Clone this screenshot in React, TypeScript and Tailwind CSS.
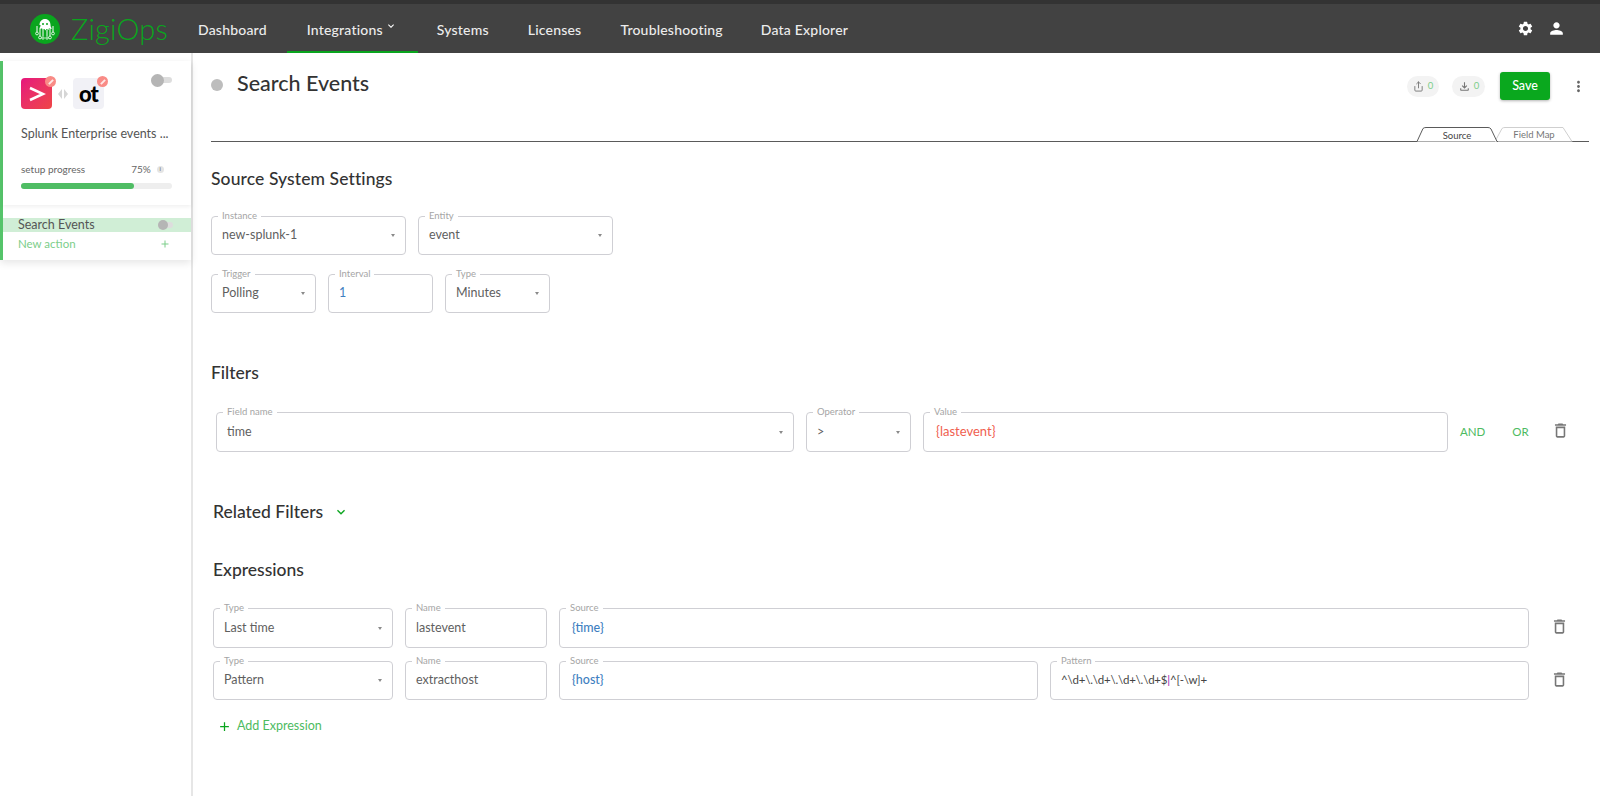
import type { ReactNode } from "react";
import { MdAdd, MdDeleteOutline, MdKeyboardArrowDown, MdMoreVert, MdOutlineFileDownload, MdPerson, MdSettings } from "react-icons/md";
import { Share } from "lucide-react";

const navItems = [
  { label: "Dashboard", cls: "ml-[33px]" },
  { label: "Integrations", cls: "ml-[40px]" },
  { label: "Systems", cls: "ml-[54px]" },
  { label: "Licenses", cls: "ml-[39px]" },
  { label: "Troubleshooting", cls: "ml-[39px]" },
  { label: "Data Explorer", cls: "ml-[38px]" },
];

function Logo() {
  return (
    <svg width="30" height="30" viewBox="0 0 30 30" className="shrink-0">
      <circle cx="15" cy="15" r="15" fill="#0aa51e" />
      <path d="M9.500 11c0-3.500 2.300-6 5.500-6s5.500 2.500 5.500 6c0 1.500 .5 2.500 1.500 3.500l-2 .5-1-1-.5 2-2-1-1 1.500-1-1.500-2 1-.5-2-1 1-2-.5c1-1 1.500-2 1.500-3.500z" fill="#fff" />
      <path d="M7 12v6M10 15v7M13 16v6M17 16v6M20 15v7M23 12v6" stroke="#fff" strokeWidth="1" fill="none" />
      <circle cx="7" cy="19.500" r="1.400" fill="none" stroke="#fff" strokeWidth=".8" />
      <circle cx="10" cy="23.500" r="1.400" fill="none" stroke="#fff" strokeWidth=".8" />
      <circle cx="13" cy="24" r="1.200" fill="none" stroke="#fff" strokeWidth=".8" />
      <circle cx="17" cy="24" r="1.200" fill="none" stroke="#fff" strokeWidth=".8" />
      <circle cx="20" cy="23.500" r="1.400" fill="none" stroke="#fff" strokeWidth=".8" />
      <circle cx="23" cy="19.500" r="1.400" fill="none" stroke="#fff" strokeWidth=".8" />
      <circle cx="13" cy="10" r="1" fill="#0aa51e" />
      <circle cx="17" cy="10" r="1" fill="#0aa51e" />
    </svg>
  );
}

function Header() {
  return (
    <header className="flex h-[53px] shrink-0 items-center border-t-4 border-[#333333] bg-[#424242] pl-[30px] pr-[34px]">
      <Logo />
      <span className="ml-[11px] w-[94px] text-[29px] leading-none font-light tracking-[0.2px] text-[#0aa51e]">ZigiOps</span>
      {navItems.map((item) => (
        <div key={item.label} className={`${item.cls} relative flex h-full items-center pt-[2px] text-[14px] font-medium tracking-[0.2px] text-[#ececec]`}>
          {item.label}
          {item.label === "Integrations" && (
            <>
              <MdKeyboardArrowDown className="absolute -right-[14px] top-[16px] text-[12px] text-white" />
              <span className="absolute -left-[20px] -right-[35px] bottom-0 h-[2px] bg-[#0aa51e]" />
            </>
          )}
        </div>
      ))}
      <div className="ml-auto flex items-center gap-[13px] text-white">
        <MdSettings className="text-[17px]" />
        <MdPerson className="text-[19px]" />
      </div>
    </header>
  );
}

function Toggle({ small }: { small?: boolean }) {
  return (
    <div className={`relative h-[6px] rounded-full bg-[#dddddd] ${small ? "w-[15px]" : "w-[21px]"}`}>
      <span className={`absolute left-0 rounded-full bg-[#b5b5b5] ${small ? "-top-[2px] h-[10px] w-[10px]" : "-top-[3.500px] h-[13px] w-[13px]"}`} />
    </div>
  );
}

function Badge() {
  return (
    <span className="absolute -right-[4px] -top-[2px] flex h-[11px] w-[11px] items-center justify-center rounded-full bg-[#f98b86]">
      <span className="h-[2px] w-[6px] -rotate-45 bg-white/80" />
    </span>
  );
}

function Sidebar() {
  return (
    <aside className="w-[193px] shrink-0 border-r-2 border-[#e6e6e6] pt-[8px]">
      <div className="border-l-[3px] border-[#55c46a] shadow-[0_3px_8px_rgba(0,0,0,0.10)]">
        <div className="h-[144px] px-[18px] pt-[17px] shadow-[0_2px_4px_rgba(0,0,0,0.06)]">
          <div className="flex items-start">
            <div className="relative flex h-[31px] w-[31px] items-center justify-center rounded-[4px] bg-gradient-to-br from-[#e6127c] to-[#ef4444]">
              <svg width="18" height="16" viewBox="0 0 18 16">
                <path d="M2 2l13 6-13 6" fill="none" stroke="#fff" strokeWidth="2.600" />
              </svg>
              <Badge />
            </div>
            <svg width="10" height="10" viewBox="0 0 10 10" className="ml-[6px] mt-[11px]">
              <path d="M4 0v10L0 5zM6 0v10l4-5z" fill="#d6d6d6" />
            </svg>
            <div className="relative ml-[5px] flex h-[31px] w-[31px] items-center justify-center rounded-[4px] bg-[#f1f1f6] text-[22px] font-black tracking-[-1px] text-black">
              ot
              <Badge />
            </div>
            <div className="ml-auto -mt-[1px] mr-[1px]">
              <Toggle />
            </div>
          </div>
          <div className="mt-[16px] whitespace-nowrap text-[12.500px] leading-[18px] text-[#555555]">Splunk Enterprise events ...</div>
          <div className="mt-[19px] flex items-center text-[10px] leading-[14px] text-[#666666]">
            <span>setup progress</span>
            <span className="ml-[46px]">75%</span>
            <span className="ml-[6px] flex h-[7px] w-[7px] items-center justify-center rounded-full bg-[#e4e4e4] text-[6px] leading-none">i</span>
          </div>
          <div className="mt-[7px] h-[6px] w-[151px] rounded-full bg-[#eeeeee]">
            <div className="h-full w-[113px] rounded-full bg-[#4fbd64]" />
          </div>
        </div>
        <div className="pt-[13px] pb-[9px]">
          <div className="flex h-[14px] items-center justify-between bg-[#d0eed6] pl-[15px] pr-[18px] text-[12.500px] text-[#555555]">
            Search Events
            <Toggle small />
          </div>
          <div className="mt-[5px] flex items-center justify-between pl-[15px] pr-[20px] text-[11.500px] leading-[14px] text-[#7cce8a]">
            New action
            <MdAdd className="text-[12px]" />
          </div>
        </div>
      </div>
    </aside>
  );
}

function Field({ label, w, children, caret, h = "h-[39px]" }: { label: string; w: string; children: ReactNode; caret?: boolean; h?: string }) {
  return (
    <div className={`relative flex ${w} ${h} shrink-0 items-center justify-between rounded-[4px] border border-[#cfcfd4] px-[10px] text-[12.500px] text-[#5f5f5f]`}>
      <span className="absolute -top-[7px] left-[6px] bg-white px-[4px] text-[9.500px] leading-[12px] text-[#a5a5a5]">{label}</span>
      <span className="whitespace-nowrap">{children}</span>
      {caret && <span className="h-0 w-0 border-x-[2.500px] border-t-[3px] border-x-transparent border-t-[#8a8a8a]" />}
    </div>
  );
}

function Trash({ cls }: { cls: string }) {
  return <MdDeleteOutline className={`-mt-[3px] text-[19px] text-[#777777] ${cls}`} />;
}

function Toolbar() {
  return (
    <div className="flex h-[73px] items-start pt-[19px]">
      <span className="mt-[7px] h-[12px] w-[12px] rounded-full bg-[#bdbdbd]" />
      <h1 className="-mt-[2px] ml-[14px] text-[21.500px] leading-[26px] font-medium text-[#333333]">Search Events</h1>
      <div className="ml-auto flex items-center pr-[13px]">
        <div className="flex h-[21px] w-[32px] items-center justify-center gap-[4px] rounded-full bg-[#f3f3f3] text-[9.500px] text-[#7cce8a]">
          <Share size={11} className="text-[#777777]" />0
        </div>
        <div className="ml-[13px] flex h-[21px] w-[33px] items-center justify-center gap-[3px] rounded-full bg-[#f3f3f3] text-[9.500px] text-[#7cce8a]">
          <MdOutlineFileDownload className="text-[13px] text-[#777777]" />0
        </div>
        <button className="ml-[15px] h-[28px] w-[50px] rounded-[3px] bg-[#0aa81e] text-[12.500px] font-medium text-white shadow-[0_1px_3px_rgba(0,0,0,0.3)]">Save</button>
        <MdMoreVert className="ml-[20px] text-[17px] text-[#666666]" />
      </div>
    </div>
  );
}

function Tabs() {
  return (
    <div className="relative mr-[11px] h-[16px] border-b border-[#5a5a5a]">
      <div className="absolute bottom-[-1px] right-[16px] h-[15px] w-[78px] text-center text-[9.500px] leading-[15px] text-[#777777]">
        <svg width="78" height="15" viewBox="0 0 78 15" className="absolute left-0 top-0">
          <path d="M0 14.500L7 1.500Q8 .5 10 .5H68L77 14.500" fill="#fff" stroke="#cfcfcf" />
        </svg>
        <span className="relative">Field Map</span>
      </div>
      <div className="absolute bottom-[-1px] right-[91px] h-[15px] w-[82px] text-center text-[9.500px] leading-[17px] text-[#444444]">
        <svg width="82" height="15" viewBox="0 0 82 15" className="absolute left-0 top-0">
          <path d="M0 14.500H1L7 1.500Q8 .5 10 .5H72Q74 .5 75 2L81 14.500H82" fill="#fff" stroke="#5a5a5a" />
        </svg>
        <span className="relative">Source</span>
      </div>
    </div>
  );
}

function Main() {
  return (
    <main className="min-w-0 flex-1 pl-[18px]">
      <Toolbar />
      <Tabs />

      <h2 className="mt-[26px] text-[17.500px] leading-[22px] font-medium tracking-[0.1px] text-[#333333]">Source System Settings</h2>
      <div className="mt-[26px] flex gap-[12px]">
        <Field label="Instance" w="w-[195px]" caret>new-splunk-1</Field>
        <Field label="Entity" w="w-[195px]" caret>event</Field>
      </div>
      <div className="mt-[19px] flex gap-[12px]">
        <Field label="Trigger" w="w-[105px]" caret>Polling</Field>
        <Field label="Interval" w="w-[105px]"><span className="text-[#3f7fc1]">1</span></Field>
        <Field label="Type" w="w-[105px]" caret>Minutes</Field>
      </div>

      <h2 className="mt-[49px] text-[17.500px] leading-[22px] font-medium text-[#333333]">Filters</h2>
      <div className="ml-[5px] mt-[28px] flex items-center gap-[12px]">
        <Field label="Field name" w="w-[578px]" h="h-[40px]" caret>time</Field>
        <Field label="Operator" w="w-[105px]" h="h-[40px]" caret>&gt;</Field>
        <Field label="Value" w="w-[525px]" h="h-[40px]"><span className="ml-[2px] text-[13px] text-[#f0604f]">{"{lastevent}"}</span></Field>
        <span className="text-[11.500px] text-[#4dbb5f]">AND</span>
        <span className="ml-[15px] text-[11.500px] text-[#4dbb5f]">OR</span>
        <Trash cls="ml-[10px]" />
      </div>

      <div className="ml-[2px] mt-[49px] flex items-center gap-[10px]">
        <h2 className="text-[17.500px] leading-[22px] font-medium text-[#333333]">Related Filters</h2>
        <MdKeyboardArrowDown className="text-[16px] text-[#0aa51e]" />
      </div>

      <h2 className="ml-[2px] mt-[36px] text-[17.500px] leading-[22px] font-medium text-[#333333]">Expressions</h2>
      <div className="ml-[2px] mt-[27px] flex items-center gap-[12px]">
        <Field label="Type" w="w-[180px]" h="h-[40px]" caret>Last time</Field>
        <Field label="Name" w="w-[142px]" h="h-[40px]">lastevent</Field>
        <Field label="Source" w="w-[970px]" h="h-[40px]"><span className="ml-[2px] font-medium text-[#3f7fc1]">{"{time}"}</span></Field>
        <Trash cls="ml-[9px]" />
      </div>
      <div className="ml-[2px] mt-[13px] flex items-center gap-[12px]">
        <Field label="Type" w="w-[180px]" caret>Pattern</Field>
        <Field label="Name" w="w-[142px]">extracthost</Field>
        <Field label="Source" w="w-[479px]"><span className="ml-[2px] font-medium text-[#3f7fc1]">{"{host}"}</span></Field>
        <Field label="Pattern" w="w-[479px]">
          <span className="text-[11.500px] tracking-[-0.2px] text-[#444444]">
            {"^\\d+\\.\\d+\\.\\d+\\.\\d+$"}
            <span className="text-[#9c27b0]">|</span>
            {"^[-\\w]+"}
          </span>
        </Field>
        <Trash cls="ml-[9px]" />
      </div>
      <div className="ml-[6px] mt-[18px] flex items-center gap-[5px] text-[12.500px] leading-[16px] text-[#4dbb5f]">
        <MdAdd className="text-[15px] text-[#0aa51e]" />
        Add Expression
      </div>
    </main>
  );
}

export default function App() {
  return (
    <div className="flex h-screen flex-col overflow-hidden bg-white [font-family:Lato,sans-serif]">
      <Header />
      <div className="flex min-h-0 flex-1">
        <Sidebar />
        <Main />
      </div>
    </div>
  );
}
